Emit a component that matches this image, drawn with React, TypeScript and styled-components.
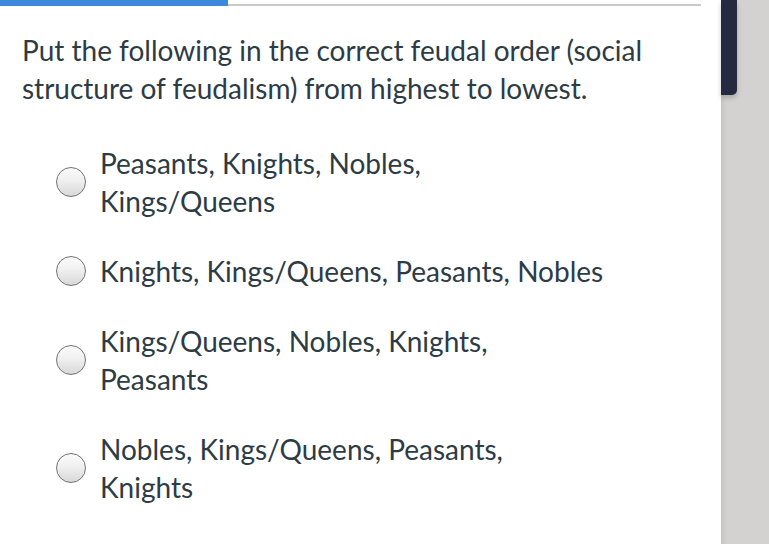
import React from "react";
import styled, { createGlobalStyle } from "styled-components";

const Global = createGlobalStyle`
  html, body { margin: 0; padding: 0; background: #d3d2d0; }
  body { font-family: Lato, "Open Sans", sans-serif; }
`;

const Page = styled.div`
  display: flex;
  width: 769px;
  height: 544px;
  overflow: hidden;
  background: #d3d2d0;
`;

const Panel = styled.div`
  width: 721px;
  height: 544px;
  background: #ffffff;
  display: flex;
  flex-direction: column;
`;

const Progress = styled.div`
  display: flex;
  align-items: flex-end;
  width: 701px;
  height: 6px;
`;

const ProgressFill = styled.div`
  width: 228px;
  height: 6px;
  background: #3d88da;
`;

const ProgressTrack = styled.div`
  flex: 1;
  height: 2px;
  background: #c9c9c9;
`;

const Side = styled.div`
  flex: 1;
  display: flex;
  flex-direction: column;
  background: linear-gradient(90deg, #c6c5c3 0px, #d3d2d0 6px);
`;

const Tab = styled.div`
  width: 16px;
  height: 95px;
  background: #262a41;
  border-bottom-right-radius: 5px;
  box-shadow: 0 3px 5px rgba(0, 0, 0, 0.2);
`;

const Question = styled.p`
  margin: 25px 0 0 22px;
  width: 680px;
  font-size: 28px;
  line-height: 38px;
  color: #2d3b45;
`;

const Options = styled.div`
  display: flex;
  flex-direction: column;
  gap: 32px;
  margin: 37px 0 0 56px;
`;

const Option = styled.label`
  display: flex;
  align-items: center;
  gap: 14px;
`;

const Radio = styled.span`
  flex: none;
  width: 28px;
  height: 28px;
  border-radius: 50%;
  border: 1.5px solid #727272;
  background: linear-gradient(180deg, #fbfbfb 0%, #f0f0f0 45%, #d8d8d8 100%);
`;

const OptionText = styled.span`
  font-size: 28px;
  line-height: 38px;
  color: #2d3b45;
`;

const options: string[][] = [
  ["Peasants, Knights, Nobles,", "Kings/Queens"],
  ["Knights, Kings/Queens, Peasants, Nobles"],
  ["Kings/Queens, Nobles, Knights,", "Peasants"],
  ["Nobles, Kings/Queens, Peasants,", "Knights"],
];

export default function App() {
  return (
    <Page>
      <Global />
      <Panel>
        <Progress>
          <ProgressFill />
          <ProgressTrack />
        </Progress>
        <Question>
          Put the following in the correct feudal order (social structure of feudalism) from highest to lowest.
        </Question>
        <Options>
          {options.map((lines) => (
            <Option key={lines.join(" ")}>
              <Radio />
              <OptionText>
                {lines.map((l, i) => (
                  <React.Fragment key={l}>
                    {i > 0 && <br />}
                    {l}
                  </React.Fragment>
                ))}
              </OptionText>
            </Option>
          ))}
        </Options>
      </Panel>
      <Side>
        <Tab />
      </Side>
    </Page>
  );
}
